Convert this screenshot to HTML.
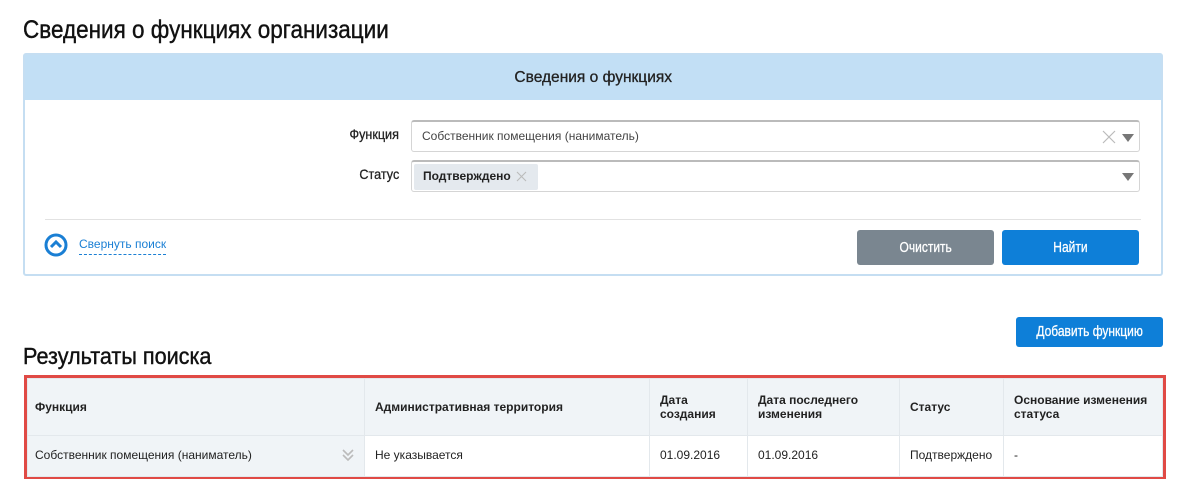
<!DOCTYPE html>
<html><head><meta charset="utf-8"><style>
*{box-sizing:border-box;margin:0;padding:0}
body{width:1187px;height:496px;background:#fff;font-family:"Liberation Sans",sans-serif;color:#222;position:relative;overflow:hidden}
.abs{position:absolute}
.cond{display:inline-block;transform-origin:left center;transform:scaleX(.9);white-space:nowrap}
.h1{left:23px;top:16px;font-size:25px;color:#111;-webkit-text-stroke:.4px #111}
.panel{left:23px;top:53px;width:1140px;height:223px;border:2px solid #c5def2;border-radius:3px}
.phead{left:0;top:0;width:1136px;height:45px;background:#c2dff5;text-align:center;line-height:45px;font-size:16px;-webkit-text-stroke:.3px #222}
.lbl{font-size:14px;text-align:right;width:100px;-webkit-text-stroke:.3px #222}
.inp{left:411px;width:729px;height:32px;border:1px solid #d5d5d5;border-top:2px solid #bbb;border-radius:3px;background:#fff}
.btn{color:#fff;font-size:15px;text-align:center;border-radius:3px;-webkit-text-stroke:.3px #fff}
.btn .cond{transform-origin:center;transform:scaleX(.8)}
table{border-collapse:collapse;font-size:12px}
td{border:1px solid #e3e8ec;padding:0 10px;vertical-align:middle}
</style></head><body>
<div class="abs h1"><span class="cond">Сведения о функциях организации</span></div>
<div class="abs panel">
 <div class="abs phead"><span class="cond" style="transform-origin:center;transform:scaleX(.97)">Сведения о функциях</span></div>
</div>
<div class="abs lbl" style="left:299px;top:126px"><span class="cond" style="transform-origin:right center">Функция</span></div>
<div class="abs inp" style="top:120px"><div class="abs" style="left:10px;top:7px;font-size:12px;color:#444">Собственник помещения (наниматель)</div>
<svg class="abs" style="left:690px;top:8px" width="14" height="14"><path d="M1 1L13 13M13 1L1 13" stroke="#bbb" stroke-width="1.2"/></svg>
<div class="abs" style="left:710px;top:12px;width:0;height:0;border-left:6px solid transparent;border-right:6px solid transparent;border-top:8px solid #777"></div></div>
<div class="abs lbl" style="left:299px;top:166px"><span class="cond" style="transform-origin:right center">Статус</span></div>
<div class="abs inp" style="top:160px">
<div class="abs" style="left:2px;top:2px;width:124px;height:26px;background:#e4e9ee;border-radius:2px;font-size:12px;font-weight:bold;line-height:25px;padding-left:9px">Подтверждено</div>
<svg class="abs" style="left:104px;top:9px" width="11" height="11"><path d="M1 1L10 10M10 1L1 10" stroke="#bbb" stroke-width="1.1"/></svg>
<div class="abs" style="left:710px;top:11px;width:0;height:0;border-left:6px solid transparent;border-right:6px solid transparent;border-top:8px solid #777"></div></div>
<div class="abs" style="left:45px;top:219px;width:1096px;height:1px;background:#e2e2e2"></div>
<svg class="abs" style="left:44px;top:233px" width="24" height="24"><circle cx="12" cy="12" r="10" fill="none" stroke="#1a7fd4" stroke-width="3"/><path d="M7 14 L12 9 L17 14" fill="none" stroke="#1a7fd4" stroke-width="3"/></svg>
<div class="abs" style="left:79px;top:237px;font-size:12px;color:#1a7fd4;border-bottom:1px dashed #1a7fd4;padding-bottom:3px">Свернуть поиск</div>
<div class="abs btn" style="left:857px;top:230px;width:137px;height:35px;background:#7a8690;line-height:35px"><span class="cond">Очистить</span></div>
<div class="abs btn" style="left:1002px;top:230px;width:137px;height:35px;background:#0e7fd8;line-height:35px"><span class="cond">Найти</span></div>
<div class="abs btn" style="left:1016px;top:317px;width:147px;height:30px;background:#0e7fd8;line-height:30px"><span class="cond">Добавить функцию</span></div>
<div class="abs" style="left:23px;top:343px;font-size:23px;color:#111;-webkit-text-stroke:.4px #111"><span class="cond" style="transform:scaleX(.94)">Результаты поиска</span></div>
<div class="abs" style="left:24px;top:375px;width:1142px;height:104px;border:3px solid #e04a45">
<table style="width:1136px">
<tr style="height:57px;background:#f0f4f7;font-weight:bold"><td style="width:337px;padding-left:7px">Функция</td><td style="width:285px">Административная территория</td><td style="width:98px">Дата<br>создания</td><td style="width:152px">Дата последнего<br>изменения</td><td style="width:104px">Статус</td><td>Основание изменения<br>статуса</td></tr>
<tr style="height:41px"><td style="background:#f0f4f7;position:relative;padding-left:7px;padding-bottom:3px">Собственник помещения (наниматель)<svg style="position:absolute;right:10px;top:12px" width="12" height="14"><path d="M1 2L6 7L11 2M1 7L6 12L11 7" fill="none" stroke="#bbb" stroke-width="1.6"/></svg></td><td style="padding-bottom:3px">Не указывается</td><td style="padding-bottom:3px">01.09.2016</td><td style="padding-bottom:3px">01.09.2016</td><td style="padding-bottom:3px">Подтверждено</td><td style="padding-bottom:3px">-</td></tr>
</table></div>
</body></html>
